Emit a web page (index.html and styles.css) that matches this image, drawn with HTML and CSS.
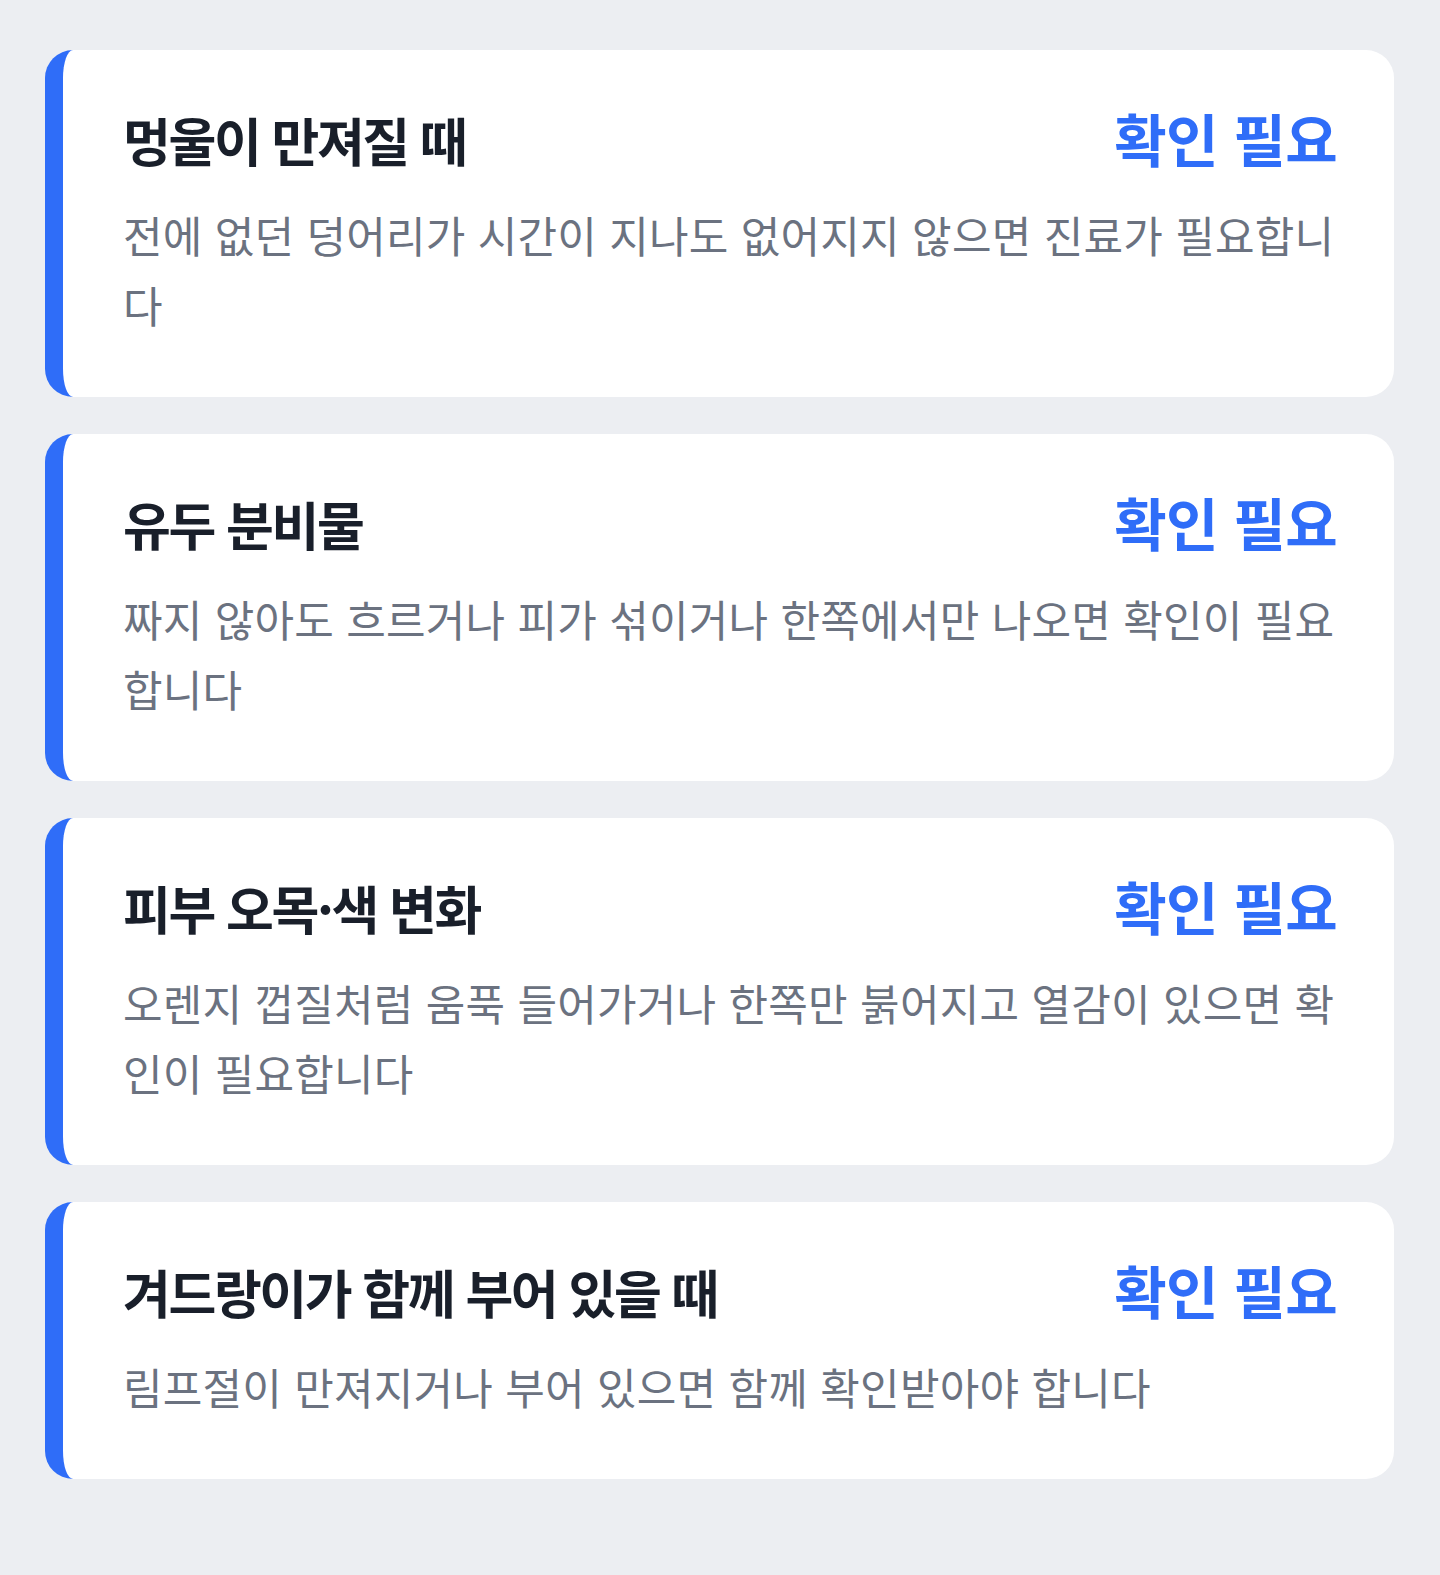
FILE: index.html
```html
<!DOCTYPE html>
<html lang="ko">
<head>
<meta charset="utf-8">
<title>확인 필요</title>
<link rel="stylesheet" href="styles.css">
</head>
<body>
<main class="list">
  <section class="card">
    <div class="card-head">
      <h2 class="card-title">멍울이 만져질 때</h2>
      <span class="card-status">확인 필요</span>
    </div>
    <p class="card-desc">전에 없던 덩어리가 시간이 지나도 없어지지 않으면 진료가 필요합니다</p>
  </section>
  <section class="card">
    <div class="card-head">
      <h2 class="card-title">유두 분비물</h2>
      <span class="card-status">확인 필요</span>
    </div>
    <p class="card-desc">짜지 않아도 흐르거나 피가 섞이거나 한쪽에서만 나오면 확인이 필요합니다</p>
  </section>
  <section class="card">
    <div class="card-head">
      <h2 class="card-title">피부 오목·색 변화</h2>
      <span class="card-status">확인 필요</span>
    </div>
    <p class="card-desc">오렌지 껍질처럼 움푹 들어가거나 한쪽만 붉어지고 열감이 있으면 확인이 필요합니다</p>
  </section>
  <section class="card">
    <div class="card-head">
      <h2 class="card-title">겨드랑이가 함께 부어 있을 때</h2>
      <span class="card-status">확인 필요</span>
    </div>
    <p class="card-desc">림프절이 만져지거나 부어 있으면 함께 확인받아야 합니다</p>
  </section>
</main>
</body>
</html>
```

FILE: styles.css
```css
html {
  background: #eceef2;
}

body {
  margin: 0;
  font-family: "Noto Sans CJK KR", "Noto Sans", sans-serif;
  background: #eceef2;
  min-height: 1575px;
}

.list {
  display: flex;
  flex-direction: column;
  gap: 37px;
  padding: 50px 46px 0 45px;
}

.card {
  background: #ffffff;
  border-left: 18px solid #2f6df8;
  border-radius: 28px;
  padding: 57px 57px 58px 60px;
}

.card-head {
  display: flex;
  justify-content: space-between;
  align-items: baseline;
}

.card-title {
  margin: 0;
  font-size: 52px;
  line-height: 60px;
  font-weight: 700;
  letter-spacing: -2.4px;
  color: #191f2a;
}

.card-status {
  font-size: 57px;
  line-height: 60px;
  font-weight: 700;
  letter-spacing: -0.6px;
  color: #2f6df8;
  white-space: nowrap;
}

.card-desc {
  margin: 29px 0 0 0;
  font-size: 43px;
  line-height: 70px;
  letter-spacing: 0.2px;
  font-weight: 400;
  color: #6b7280;
}
```
